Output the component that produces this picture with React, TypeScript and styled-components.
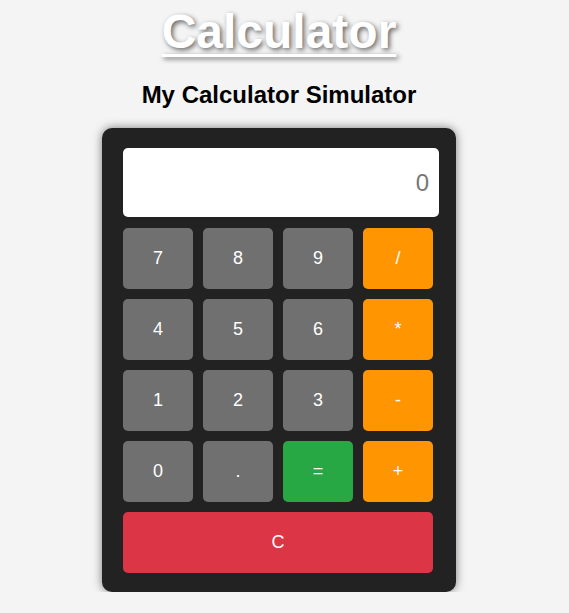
import React from "react";
import styled, { createGlobalStyle } from "styled-components";

const GlobalStyle = createGlobalStyle`
  html, body {
    margin: 0;
    padding: 0;
    background: #f4f4f4;
    font-family: "Liberation Sans", Arial, sans-serif;
  }
`;

const Page = styled.div`
  display: flex;
  flex-direction: column;
  align-items: center;
  padding-right: 11px;
`;

const Title = styled.h1`
  margin: 4px 0 0;
  font-size: 48px;
  font-weight: bold;
  color: #ffffff;
  text-decoration: underline;
  text-decoration-thickness: 3px;
  text-underline-offset: 6px;
  text-shadow: 2px 2px 5px rgba(0, 0, 0, 0.6);
  line-height: 55px;
`;

const Subtitle = styled.h2`
  margin: 22px 0 19px;
  font-size: 24px;
  font-weight: bold;
  color: #000;
  line-height: 28px;
`;

const Calculator = styled.div`
  width: 354px;
  box-sizing: border-box;
  padding: 20px 23px 19px 21px;
  background: #222222;
  border-radius: 10px;
  box-shadow: 0 0 10px rgba(0, 0, 0, 0.5);
`;

const Display = styled.div`
  width: 316px;
  height: 69px;
  box-sizing: border-box;
  background: #fff;
  border-radius: 5px;
  display: flex;
  align-items: center;
  justify-content: flex-end;
  padding-right: 10px;
  font-size: 24px;
  color: #777;
`;

const Keypad = styled.div`
  margin-top: 11px;
  display: grid;
  grid-template-columns: repeat(4, 70px);
  grid-auto-rows: 61px;
  gap: 10px;
`;

type Variant = "num" | "op" | "eq" | "clear";

const colors: Record<Variant, string> = {
  num: "#707070",
  op: "#ff9500",
  eq: "#28a745",
  clear: "#dc3545",
};

const Key = styled.button<{ $variant: Variant; $wide?: boolean }>`
  border: none;
  border-radius: 5px;
  background: ${(p) => colors[p.$variant]};
  color: #fff;
  font-family: "Liberation Sans", Arial, sans-serif;
  font-size: 18px;
  padding: 0;
  cursor: pointer;
  grid-column: ${(p) => (p.$wide ? "1 / -1" : "auto")};
`;

const keys: { label: string; variant: Variant }[] = [
  { label: "7", variant: "num" },
  { label: "8", variant: "num" },
  { label: "9", variant: "num" },
  { label: "/", variant: "op" },
  { label: "4", variant: "num" },
  { label: "5", variant: "num" },
  { label: "6", variant: "num" },
  { label: "*", variant: "op" },
  { label: "1", variant: "num" },
  { label: "2", variant: "num" },
  { label: "3", variant: "num" },
  { label: "-", variant: "op" },
  { label: "0", variant: "num" },
  { label: ".", variant: "num" },
  { label: "=", variant: "eq" },
  { label: "+", variant: "op" },
];

export default function App() {
  return (
    <>
      <GlobalStyle />
      <Page>
        <Title>Calculator</Title>
        <Subtitle>My Calculator Simulator</Subtitle>
        <Calculator>
          <Display>0</Display>
          <Keypad>
            {keys.map((k) => (
              <Key key={k.label} $variant={k.variant}>
                {k.label}
              </Key>
            ))}
            <Key $variant="clear" $wide>
              C
            </Key>
          </Keypad>
        </Calculator>
      </Page>
    </>
  );
}
